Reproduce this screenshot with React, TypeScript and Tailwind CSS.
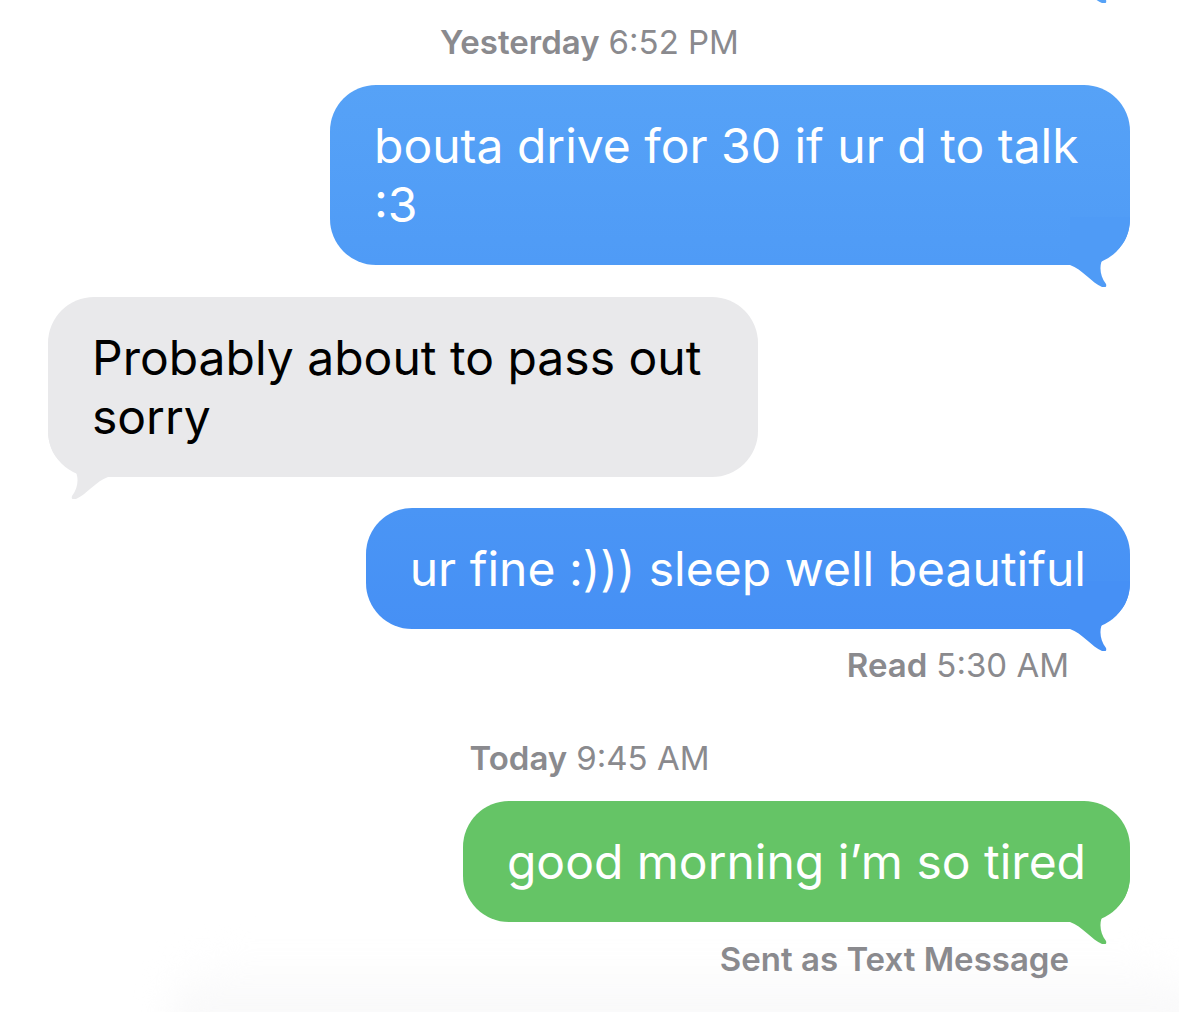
import React from "react";

// --- tipos ---
type Side = "me" | "them";

interface Message {
  side: Side;
  text: string;
  color: "blue" | "gray" | "green";
  tone?: string; // gradiente do azul
  tailColor: string;
  width?: string;
  mt: string;
}

const FONT = { fontFamily: "Inter, 'Noto Sans', 'Liberation Sans', sans-serif" };

// rabicho do balão (desenho)
const Tail: React.FC<{ color: string; side: Side; pos?: string }> = ({ color, side, pos }) => (
  <svg
    width="60"
    height="70"
    viewBox="0 0 60 70"
    className={`absolute ${pos ?? (side === "me" ? "bottom-[-22px] right-0" : "bottom-[-22px] left-0 -scale-x-100")}`}
  >
    <path
      d="M0 0 H60 C60 20 52 34 34 40 C29 46 29 58 36 67 C37 70 35 71 32 70 C22 66 12 52 0 48 Z"
      fill={color}
    />
  </svg>
);

const Stamp: React.FC<{ bold: string; rest?: string; align: "center" | "right"; mt: string }> = ({ bold, rest, align, mt }) => (
  <div
    className={`${mt} h-10 flex items-center text-[33px] text-[#8a8a8e] ${align === "center" ? "justify-center" : "justify-end pr-[110px]"}`}
  >
    <span className="font-semibold">{bold}</span>
    {rest && <span className="ml-[9px]">{rest}</span>}
  </div>
);

const Bubble: React.FC<{ m: Message }> = ({ m }) => {
  const bg =
    m.color === "gray"
      ? "bg-[#e9e9eb] text-black"
      : m.color === "green"
        ? "bg-[#65c466] text-white"
        : `${m.tone} text-white`;

  return (
    <div className={`${m.mt} flex ${m.side === "me" ? "justify-end pr-[49px]" : "justify-start pl-[48px]"}`}>
      <div className={`relative ${m.width ?? ""} rounded-[46px] px-[44px] py-[31px] text-[48px] leading-[59px] ${bg}`}>
        <Tail color={m.tailColor} side={m.side} />
        <span className="relative">{m.text}</span>
      </div>
    </div>
  );
};

export default function App() {
  return (
    <div className="relative isolate flex flex-col h-[1012px] w-full overflow-hidden bg-white" style={FONT}>
      {/* sombra suave da barra de digitação */}
      <div className="absolute -z-10 bottom-[-20px] left-[170px] right-[-20px] h-[80px] rounded-t-[60px] bg-gradient-to-b from-white to-[#f7f7f8] blur-lg" />

      {/* rabicho da mensagem anterior, cortado no topo */}
      <Tail color="#56a2f7" side="me" pos="top-[-67px] left-[1070px]" />

      <Stamp bold="Yesterday" rest="6:52 PM" align="center" mt="mt-[23px]" />

      <Bubble
        m={{
          side: "me",
          text: "bouta drive for 30 if ur d to talk :3",
          color: "blue",
          tone: "bg-gradient-to-b from-[#56a2f7] to-[#4f9bf6]",
          tailColor: "#4f9bf6",
          width: "w-[800px]",
          mt: "mt-[22px]",
        }}
      />
      <Bubble
        m={{
          side: "them",
          text: "Probably about to pass out sorry",
          color: "gray",
          tailColor: "#e9e9eb",
          width: "w-[710px]",
          mt: "mt-[32px]",
        }}
      />
      <Bubble
        m={{
          side: "me",
          text: "ur fine :))) sleep well beautiful",
          color: "blue",
          tone: "bg-gradient-to-b from-[#4a95f5] to-[#4690f5]",
          tailColor: "#4690f5",
          mt: "mt-[31px]",
        }}
      />

      <Stamp bold="Read" rest="5:30 AM" align="right" mt="mt-[17px]" />
      <Stamp bold="Today" rest="9:45 AM" align="center" mt="mt-[53px]" />

      <Bubble
        m={{
          side: "me",
          text: "good morning i’m so tired",
          color: "green",
          tailColor: "#65c466",
          mt: "mt-[22px]",
        }}
      />

      <Stamp bold="Sent as Text Message" align="right" mt="mt-[18px]" />
    </div>
  );
}
